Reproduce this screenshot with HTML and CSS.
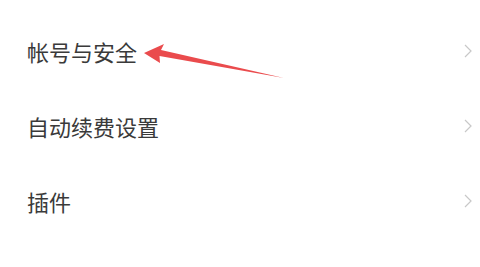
FILE: index.html
```html
<!DOCTYPE html>
<html lang="zh">
<head>
<meta charset="utf-8">
<link rel="stylesheet" href="styles.css">
</head>
<body>
<div class="page">
  <ul class="list">
    <li class="row"><span class="label">帐号与安全</span><svg class="chev" viewBox="0 0 8 14"><polyline points="1,1 7,7 1,13"/></svg></li>
    <li class="row"><span class="label">自动续费设置</span><svg class="chev" viewBox="0 0 8 14"><polyline points="1,1 7,7 1,13"/></svg></li>
    <li class="row"><span class="label">插件</span><svg class="chev" viewBox="0 0 8 14"><polyline points="1,1 7,7 1,13"/></svg></li>
    <li class="row"><span class="label">关于我们</span><svg class="chev" viewBox="0 0 8 14"><polyline points="1,1 7,7 1,13"/></svg></li>
  </ul>
  <svg class="arrow" viewBox="0 0 480 267" width="480" height="267">
    <polygon points="144,53 164,44 161,50 284,78 159.5,56 160,63" />
  </svg>
</div>
</body>
</html>
```
FILE: styles.css
```css
html, body {
  margin: 0;
  padding: 0;
  background: #fff;
}
.page {
  position: relative;
  width: 480px;
  height: 267px;
  overflow: hidden;
  font-family: "Noto Sans CJK SC", "Noto Sans", sans-serif;
}
.list {
  list-style: none;
  margin: 0;
  padding: 13px 0 0 0;
}
.row {
  height: 75px;
  display: flex;
  align-items: center;
  justify-content: space-between;
  padding: 0 8px 0 27px;
}
.label {
  font-size: 22px;
  color: #3a3a3a;
  line-height: 1;
}
.chev {
  width: 8px;
  height: 14px;
  fill: none;
  stroke: #c8c8c8;
  stroke-width: 1.2;
}
.arrow {
  position: absolute;
  left: 0;
  top: 0;
  pointer-events: none;
}
.arrow polygon {
  fill: #ea4b4d;
}
```
